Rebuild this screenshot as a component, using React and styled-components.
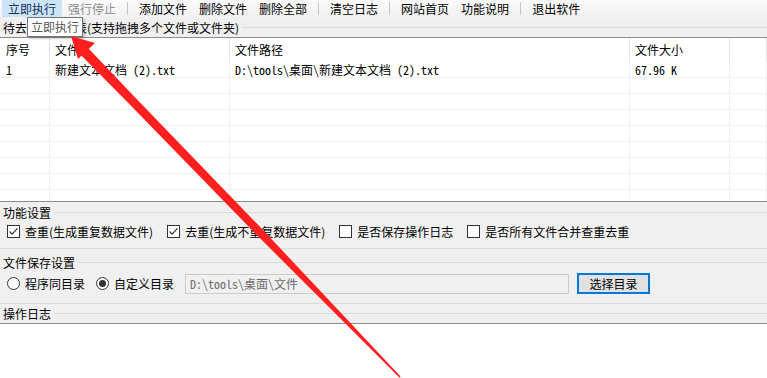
import React from "react"
import styled, { createGlobalStyle } from "styled-components"

const GlobalStyle = createGlobalStyle`
    html, body {
        margin: 0;
        padding: 0;
    }
    body {
        background: #f0f0f0;
        font-family: "Noto Sans CJK SC", "Microsoft YaHei", sans-serif;
        font-size: 12px;
        color: #000;
    }
`

const Window = styled.div`
    position: relative;
    width: 767px;
    height: 378px;
    overflow: hidden;
    display: flex;
    flex-direction: column;
    background: #f0f0f0;
`

const Top = styled.div`
    background: linear-gradient(#fbfbfb 0, #ececec 27px, #f0f0f0 27px);
`

const Toolbar = styled.div`
    display: flex;
    align-items: stretch;
    height: 17px;
    padding-left: 2px;
`

const ToolItem = styled.div`
    padding: 0 6px;
    line-height: 17px;
    white-space: nowrap;
    color: ${(p) => (p.$disabled ? "#8d8d8d" : p.$active ? "#14325a" : "#000")};
    background: ${(p) => (p.$active ? "#cce4f7" : "transparent")};
`

const Sep = styled.div`
    width: 1px;
    margin: 2px 5px;
    background: #c6c6c6;
`

const CaptionRow = styled.div`
    display: flex;
    align-items: center;
    height: ${(p) => p.$h || 20}px;
    margin-top: ${(p) => p.$mt || 0}px;
    padding-left: 3px;
    white-space: nowrap;
`

const Rule = styled.div`
    flex: 1;
    height: 1px;
    margin-left: 3px;
    background: #dadada;
`

const List = styled.div`
    box-sizing: border-box;
    height: 165px;
    background: #fff;
    border-top: 1px solid #8c8c8c;
    border-bottom: 1px solid #8c8c8c;
    overflow: hidden;
`

const Row = styled.div`
    display: grid;
    grid-template-columns: 50px 180px 400px 100px 1fr;
    height: ${(p) => (p.$head ? 24 : 16)}px;
    box-sizing: border-box;
    border-bottom: ${(p) => (p.$head ? "none" : "1px solid #f0f0f0")};
`

const Cell = styled.div`
    box-sizing: border-box;
    padding-left: ${(p) => (p.$first ? 6 : 5)}px;
    border-right: 1px solid ${(p) => (p.$head ? "#e5e5e5" : "#f0f0f0")};
    line-height: ${(p) => (p.$head ? 24 : 15)}px;
    white-space: nowrap;
    overflow: hidden;
    font-family: ${(p) =>
        p.$head
            ? `"Noto Sans CJK SC", sans-serif`
            : `"Noto Sans Mono CJK SC", "Liberation Mono", "Noto Sans CJK SC", monospace`};
`

const Group = styled.div`
    border-bottom: ${(p) => (p.$open ? "none" : "1px solid #dadada")};
`

const Options = styled.div`
    display: flex;
    align-items: ${(p) => p.$align || "flex-start"};
    height: ${(p) => p.$h}px;
    padding: ${(p) => p.$pad || "0"};
    padding-left: 7px;
    box-sizing: border-box;
`

const Option = styled.label`
    display: flex;
    align-items: center;
    gap: 5px;
    margin-right: ${(p) => p.$mr || 14}px;
    line-height: 13px;
    white-space: nowrap;
`

const Box = styled.span`
    box-sizing: border-box;
    width: 13px;
    height: 13px;
    border: 1px solid #333;
    background: #fff;
    display: flex;
    align-items: center;
    justify-content: center;
`

const Radio = styled(Box)`
    border-radius: 50%;

    &::after {
        content: "";
        width: 7px;
        height: 7px;
        border-radius: 50%;
        background: ${(p) => (p.$checked ? "#333" : "transparent")};
    }
`

const PathInput = styled.div`
    box-sizing: border-box;
    width: 384px;
    height: 20px;
    margin-right: 8px;
    padding-left: 4px;
    border: 1px solid #cccccc;
    background: #f0f0f0;
    color: #6d6d6d;
    line-height: 18px;
    font-family: "Noto Sans Mono CJK SC", "Liberation Mono", "Noto Sans CJK SC", monospace;
    white-space: nowrap;
`

const Button = styled.div`
    box-sizing: border-box;
    width: 73px;
    height: 21px;
    border: 2px solid #0078d7;
    background: #e1e1e1;
    text-align: center;
    line-height: 17px;
`

const Log = styled.div`
    flex: 1;
    margin-top: 2px;
    background: #fff;
    border-top: 1px solid #8c8c8c;
`

const Tooltip = styled.div`
    position: absolute;
    left: 27px;
    top: 17px;
    box-sizing: border-box;
    width: 56px;
    height: 20px;
    padding-left: 3px;
    line-height: 18px;
    border: 1px solid #767676;
    background: #fff;
    color: #575757;
    box-shadow: 2px 2px 2px rgba(0, 0, 0, 0.18);
`

const Overlay = styled.svg`
    position: absolute;
    left: 0;
    top: 0;
    pointer-events: none;
`

const Check = () => (
    <svg width="11" height="11" viewBox="0 0 11 11">
        <polyline points="1.5,5.5 4.2,8.2 9.5,2.3" fill="none" stroke="#333" strokeWidth="1.2" />
    </svg>
)

const tools = [
    ["立即执行", "active"],
    ["强行停止", "disabled"],
    "|",
    ["添加文件"],
    ["删除文件"],
    ["删除全部"],
    "|",
    ["清空日志"],
    "|",
    ["网站首页"],
    ["功能说明"],
    "|",
    ["退出软件"],
]

const cols = ["序号", "文件名", "文件路径", "文件大小", ""]
const files = [["1", "新建文本文档 (2).txt", "D:\\tools\\桌面\\新建文本文档 (2).txt", "67.96 K", ""]]

const options = [
    ["查重(生成重复数据文件)", true],
    ["去重(生成不重复数据文件)", true],
    ["是否保存操作日志", false],
    ["是否所有文件合并查重去重", false],
]

const App = () => {
    const rows = [...files]
    while (rows.length < 9) rows.push(["", "", "", "", ""])

    return (
        <Window>
            <GlobalStyle />
            <Top>
                <Toolbar>
                    {tools.map((t, i) =>
                        t === "|" ? (
                            <Sep key={i} />
                        ) : (
                            <ToolItem key={i} $active={t[1] === "active"} $disabled={t[1] === "disabled"}>
                                {t[0]}
                            </ToolItem>
                        )
                    )}
                </Toolbar>
                <CaptionRow>
                    待去重文件列表(支持拖拽多个文件或文件夹)
                    <Rule />
                </CaptionRow>
            </Top>

            <List>
                <Row $head>
                    {cols.map((c, i) => (
                        <Cell key={i} $head $first={i === 0}>{c}</Cell>
                    ))}
                </Row>
                {rows.map((r, i) => (
                    <Row key={i}>
                        {r.map((c, j) => (
                            <Cell key={j} $first={j === 0}>{c}</Cell>
                        ))}
                    </Row>
                ))}
            </List>

            <Group>
                <CaptionRow>
                    功能设置
                    <Rule />
                </CaptionRow>
                <Options $h={26} $pad="3px 0 0 0">
                    {options.map(([label, on], i) => (
                        <Option key={i}>
                            <Box>{on && <Check />}</Box>
                            {label}
                        </Option>
                    ))}
                </Options>
            </Group>

            <Group>
                <CaptionRow $mt={3}>
                    文件保存设置
                    <Rule />
                </CaptionRow>
                <Options $h={31} $align="center" $pad="1px 0 9px 0">
                    <Option $mr={11}>
                        <Radio />
                        程序同目录
                    </Option>
                    <Option $mr={11}>
                        <Radio $checked />
                        自定义目录
                    </Option>
                    <PathInput>D:\tools\桌面\文件</PathInput>
                    <Button>选择目录</Button>
                </Options>
            </Group>

            <Group $open>
                <CaptionRow $h={16} $mt={1}>
                    操作日志
                    <Rule />
                </CaptionRow>
            </Group>
            <Log />

            <Tooltip>立即执行</Tooltip>

            <Overlay width="767" height="378" viewBox="0 0 767 378">
                <polygon
                    fill="#ff1f1f"
                    points="86.6,46.5 134.7,96.9 260.4,227.2 327.2,298.3 400.6,376.4 399.4,377.6 323.6,301.7 254.6,232.8 128.3,103.1 79.4,53.5"
                />
                <polygon fill="#ff1f1f" points="71,36 95,43 78,59" />
            </Overlay>
        </Window>
    )
}

export default App
